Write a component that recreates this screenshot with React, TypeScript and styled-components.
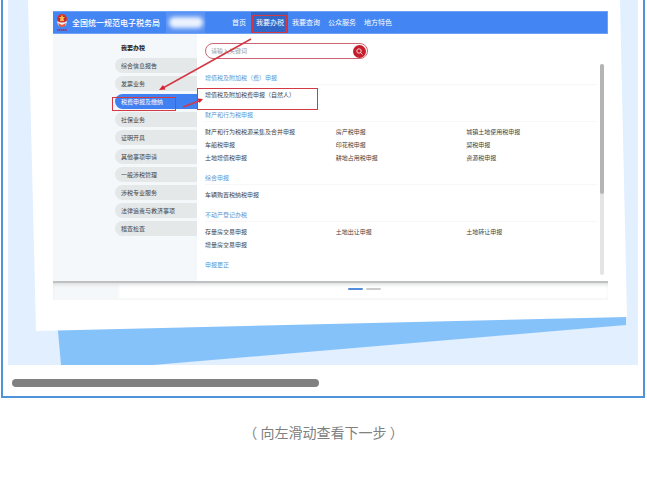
import React from "react";
import styled, { createGlobalStyle } from "styled-components";

const GlobalStyle = createGlobalStyle`
  *, *::before, *::after { box-sizing: border-box; }
  body {
    margin: 0;
    background: #fff;
    font-family: "Noto Sans CJK SC", sans-serif;
  }
  button, input { font-family: inherit; }
`;

const Frame = styled.section`
  margin: 0 2px 0 1px;
  padding: 0 5px 9px;
  border: 2px solid #4f93d8;
  border-top: 0;
`;

const Slide = styled.div`
  position: relative;
  height: 365px;
  padding: 11px 30px 0 45px;
  overflow: hidden;
  background: #e1effe;
`;

const Backdrop = styled.svg`
  position: absolute;
  inset: 0;
  width: 100%;
  height: 100%;
`;

const Portal = styled.div`
  position: relative;
`;

const Header = styled.header`
  display: flex;
  align-items: center;
  height: 23px;
  padding-left: 3px;
  background: #4285f3;
  border: 1px solid #6ea2f6;
  border-left: 0;
`;

const Emblem = styled.svg`
  width: 12px;
  height: 20px;
  margin-right: 4px;
`;

const Brand = styled.h1`
  margin: 0;
  width: 94px;
  color: #fff;
  font-size: 8px;
  line-height: 20px;
  font-weight: 500;
  white-space: nowrap;
`;

const Redacted = styled.span`
  width: 39px;
  height: 21px;
  display: grid;
  place-items: center;
  background: #5992f4;

  &::before {
    content: "";
    width: 34px;
    height: 11px;
    border-radius: 5px;
    background: #edf3fe;
    filter: blur(2px);
  }
`;

const Nav = styled.nav`
  display: flex;
  margin-left: 23px;
`;

const NavLink = styled.a<{ $active?: boolean }>`
  margin-left: ${(p) => (p.$active ? "1px" : "0")};
  padding: 0 4px 0 ${(p) => (p.$active ? "5px" : "4px")};
  color: #fff;
  background: ${(p) => (p.$active ? "#3267c8" : "transparent")};
  font-size: 7px;
  line-height: 21px;
  text-decoration: none;
  white-space: nowrap;
`;

const Main = styled.div`
  display: flex;
  height: 247px;
  background: #fff;
`;

const Sidebar = styled.aside`
  flex: 0 0 144px;
  padding: 8px 0 0 62px;
  background: #f5f8fa;
`;

const SideTitle = styled.h2`
  margin: 0 0 4px 6px;
  color: #222;
  font-size: 6px;
  line-height: 12px;
  font-weight: 700;
`;

const Menu = styled.div`
  display: flex;
  flex-direction: column;
  justify-content: space-between;
  height: 178px;
`;

const MenuItem = styled.button<{ $active?: boolean }>`
  height: 15px;
  padding: 0 0 0 6px;
  border: 0;
  border-radius: 8px 0 0 8px;
  color: ${(p) => (p.$active ? "#fff" : "#444")};
  background: ${(p) => (p.$active ? "#4080f0" : "#e4e8e9")};
  font-size: 6px;
  line-height: 15px;
  text-align: left;
`;

const Content = styled.main`
  flex: 1;
  min-width: 0;
  padding: 9px 11px 0 8px;
`;

const Search = styled.form`
  display: flex;
  align-items: center;
  width: 163px;
  height: 16px;
  padding: 0 1px 0 5px;
  border: 1px solid #cb6572;
  border-radius: 8px;
`;

const SearchInput = styled.input`
  flex: 1;
  min-width: 0;
  padding: 0;
  border: 0;
  outline: 0;
  background: transparent;
  font-size: 6px;
  line-height: 14px;

  &::placeholder { color: #999; }
`;

const SearchButton = styled.button`
  display: grid;
  place-items: center;
  width: 13px;
  height: 13px;
  padding: 0;
  border: 0;
  border-radius: 50%;
  background: #c51d2b;
`;

const Section = styled.section`
  padding-bottom: 7px;
`;

const SectionTitle = styled.h3`
  margin: 0;
  color: #5a96d0;
  font-size: 6px;
  line-height: 13px;
  font-weight: 400;
`;

const Links = styled.div`
  display: grid;
  grid-template-columns: repeat(3, 1fr);
  padding-top: 3px;
  border-top: 1px solid #f7f7f7;
`;

const ItemLink = styled.a`
  color: #444;
  font-size: 6px;
  line-height: 13px;
  text-decoration: none;
  white-space: nowrap;
`;

const Scroller = styled.div`
  display: flex;
  gap: 3px;
  margin-top: 5px;
  height: 211px;
  margin-right: -7px;
`;

const Sections = styled.div`
  flex: 1;
  min-width: 0;
  padding-top: 7px;
`;

const Track = styled.div`
  width: 4px;
  border-radius: 2px;
  background: #e4e4e4;
`;

const Thumb = styled.div`
  height: 130px;
  border-radius: 2px;
  background: #b4b4b4;
`;

const Base = styled.div`
  display: flex;
  height: 19px;
  padding-left: 65px;
  background: #f5f8fa;
  border-bottom: 2px solid #f6f7f7;
  box-shadow: inset 0 2px 0 #bfc0c1, inset 0 5px 4px -2px #d3d4d5;
`;

const Dots = styled.div`
  flex: 1;
  display: flex;
  justify-content: center;
  align-items: flex-start;
  gap: 3px;
  padding: 7px 0 0 2px;
  background: #fff;
  box-shadow: inset 0 2px 0 #bfc0c1, inset 0 5px 4px -2px #d3d4d5;
`;

const Dash = styled.span<{ $active?: boolean }>`
  width: 15px;
  height: 2px;
  border-radius: 1px;
  background: ${(p) => (p.$active ? "#548ddc" : "#ccc")};
`;

const Marks = styled.svg`
  position: absolute;
  top: 0;
  left: 0;
  pointer-events: none;
`;

const SlideBar = styled.div`
  width: calc(49% - 2px);
  height: 8px;
  margin: 14px 0 0 4px;
  border-radius: 4px;
  background: #808080;
`;

const Hint = styled.p`
  margin: 23px 0 0;
  color: #808080;
  font-size: 14px;
  line-height: 22px;
  text-align: center;
`;

const navItems = ["首页", "我要办税", "我要查询", "公众服务", "地方特色"];
const menuItems = [
  "综合信息报告",
  "发票业务",
  "税费申报及缴纳",
  "社保业务",
  "证明开具",
  "其他事项申请",
  "一般涉税管理",
  "涉税专业服务",
  "法律追责与救济事项",
  "稽查检查",
];
const sections = [
  { title: "增值税及附加税（费）申报", items: ["增值税及附加税费申报（自然人）"] },
  {
    title: "财产和行为税申报",
    items: [
      "财产和行为税税源采集及合并申报", "房产税申报", "城镇土地使用税申报",
      "车船税申报", "印花税申报", "契税申报",
      "土地增值税申报", "耕地占用税申报", "资源税申报",
    ],
  },
  { title: "综合申报", items: ["车辆购置税纳税申报"] },
  {
    title: "不动产登记办税",
    items: ["存量房交易申报", "土地出让申报", "土地转让申报", "增量房交易申报"],
  },
  { title: "申报更正", items: [] as string[] },
];

export default function App() {
  return (
    <>
      <GlobalStyle />
      <Frame>
        <Slide>
          <Backdrop viewBox="0 0 630 365" preserveAspectRatio="none" aria-hidden="true">
            <path d="M49 320 L53 365 H145 L618 325 V314 Z" fill="#86c2fa" />
            <path d="M20 0 H612 L619 317 L28 331 Z" fill="#fff" />
          </Backdrop>
          <Portal>
            <Header>
              <Emblem viewBox="0 0 12 20" aria-hidden="true">
                <circle cx="6" cy="6" r="5" fill="#d9342b" />
                <path d="M2 5 A4.5 4.5 0 0 1 10 5 L9 8 H3 Z" fill="#b92a2c" />
                <path d="M6 1.5 L7 4 H9 L7.5 5.5 L8 8 H4 L4.5 5.5 L3 4 H5 Z" fill="#f3bf4f" />
                <path d="M1 8 Q6 11 11 8 L10 12 Q6 15 2 12 Z" fill="#eef1fa" />
                <path d="M2 10 L6 12 L10 10 L9 13 Q6 15 3 13 Z" fill="#e25b3c" />
                <path d="M1 17 H11" stroke="#a9366c" strokeWidth="2" strokeDasharray="1.5 .5" />
              </Emblem>
              <Brand>全国统一规范电子税务局</Brand>
              <Redacted />
              <Nav>
                {navItems.map((n, i) => (
                  <NavLink key={n} href="#" $active={i === 1}>{n}</NavLink>
                ))}
              </Nav>
            </Header>
            <Main>
              <Sidebar>
                <SideTitle>我要办税</SideTitle>
                <Menu>
                  {menuItems.map((m, i) => (
                    <MenuItem key={m} type="button" $active={i === 2}>{m}</MenuItem>
                  ))}
                </Menu>
              </Sidebar>
              <Content>
                <Search onSubmit={(e) => e.preventDefault()}>
                  <SearchInput aria-label="搜索" placeholder="请输入关键词" />
                  <SearchButton aria-label="搜索">
                    <svg width="7" height="7" viewBox="0 0 7 7" fill="none" stroke="#fff" strokeWidth="0.8">
                      <circle cx="3" cy="3" r="2.2" />
                      <path d="M4.6 4.6 L6.5 6.5" />
                    </svg>
                  </SearchButton>
                </Search>
                <Scroller>
                  <Sections>
                    {sections.map((s) => (
                      <Section key={s.title}>
                        <SectionTitle>{s.title}</SectionTitle>
                        {s.items.length > 0 && (
                          <Links>
                            {s.items.map((t) => (
                              <ItemLink key={t} href="#">{t}</ItemLink>
                            ))}
                          </Links>
                        )}
                      </Section>
                    ))}
                  </Sections>
                  <Track><Thumb /></Track>
                </Scroller>
              </Content>
            </Main>
            <Base>
              <Dots>
                <Dash $active />
                <Dash />
              </Dots>
            </Base>
            <Marks width="270" height="110" viewBox="0 0 270 110" fill="none" stroke="#d33a45" aria-hidden="true">
              <rect x="199.5" y="4.5" width="34" height="17" />
              <rect x="59.5" y="86.5" width="63" height="13" />
              <rect x="144.5" y="77.5" width="120" height="21" />
              <path d="M198 28 L110 77 M130 96 L146 90" strokeWidth="1.5" />
              <path d="M106 79 L110 74 L112.5 78.5 Z M150 88 L144.5 87.5 L146.5 92 Z" fill="#d8202c" stroke="none" />
            </Marks>
          </Portal>
        </Slide>
        <SlideBar />
      </Frame>
      <Hint>（ 向左滑动查看下一步 ）</Hint>
    </>
  );
}
